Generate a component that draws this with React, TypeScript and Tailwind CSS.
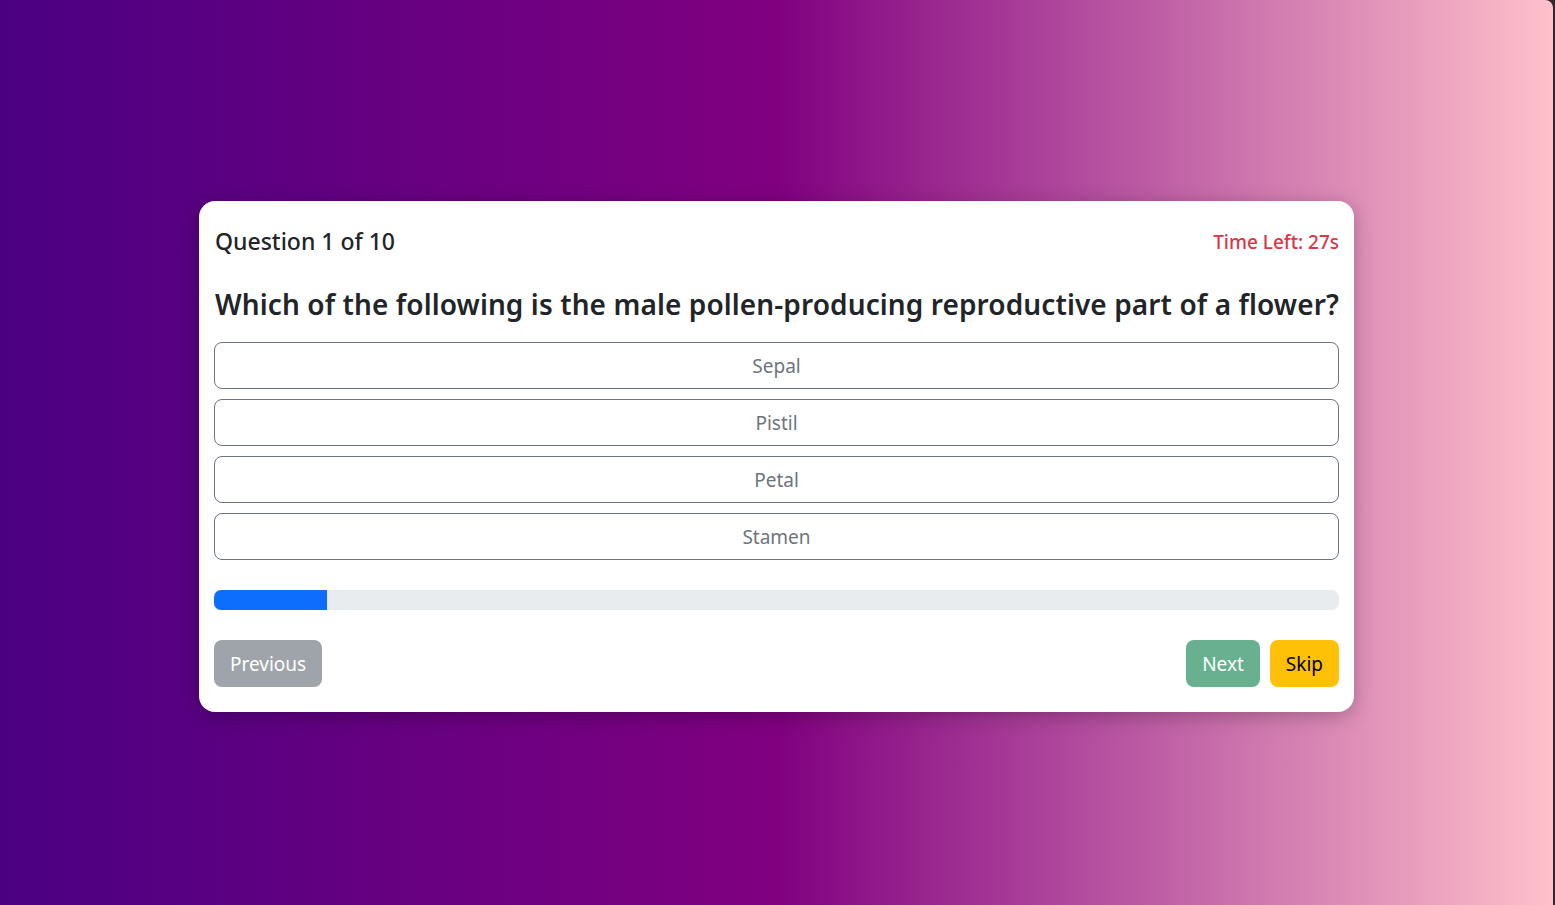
const options = ["Sepal", "Pistil", "Petal", "Stamen"];

const App = () => {
  const current = 1;
  const total = 10;
  const progress = (current / total) * 100;

  return (
    <div className="flex h-[905px] w-full bg-[#2b2b2b]" style={{ fontFamily: '"Noto Sans", "Open Sans", sans-serif' }}>
      <div className="mr-[2px] flex flex-1 items-center justify-center rounded-tr-[8px] pt-2 bg-[linear-gradient(to_right,#4b0082,#800080,#ffc0cb)]">
        <div className="w-[1155px] rounded-[16px] bg-white p-[15px] shadow-[0_4px_20px_rgba(0,0,0,0.25)]">
          {/* Header */}
          <div className="flex items-center justify-between pt-[12px] pl-px">
            <h4 className="text-[23px] font-medium leading-[1.2] text-[#212529]">
              Question {current} of {total}
            </h4>
            <span className="text-[19px] font-medium text-[#dc3545]">Time Left: 27s</span>
          </div>

          {/* Question */}
          <h3 className="mt-[32px] mb-[20px] pl-px text-[28px] font-semibold leading-[1.2] tracking-[0.1px] text-[#212529]">
            Which of the following is the male pollen-producing reproductive part of a flower?
          </h3>

          {/* Options */}
          <div className="flex flex-col gap-[10px]">
            {options.map((opt) => (
              <button
                key={opt}
                className="h-[47px] w-full rounded-[8px] border border-[#6c757d] bg-white pt-[2px] text-[19px] text-[#6c757d]"
              >
                {opt}
              </button>
            ))}
          </div>

          {/* Progress */}
          <div className="mt-[30px] h-[20px] w-full overflow-hidden rounded-[7px] bg-[#e9ecef]">
            <div className="h-full bg-[#0d6efd]" style={{ width: `${progress}%` }} />
          </div>

          {/* Nav */}
          <div className="mt-[30px] mb-[10px] flex items-center justify-between">
            <button className="h-[47px] rounded-[8px] bg-[#6c757d] px-4 pt-[2px] text-[19px] text-white opacity-65">
              Previous
            </button>
            <div className="flex gap-[10px]">
              <button className="h-[47px] rounded-[8px] bg-[#198754] px-4 pt-[2px] text-[19px] text-white opacity-65">
                Next
              </button>
              <button className="h-[47px] rounded-[8px] bg-[#ffc107] px-4 pt-[2px] text-[19px] text-black">
                Skip
              </button>
            </div>
          </div>
        </div>
      </div>
    </div>
  );
};

export default App;
